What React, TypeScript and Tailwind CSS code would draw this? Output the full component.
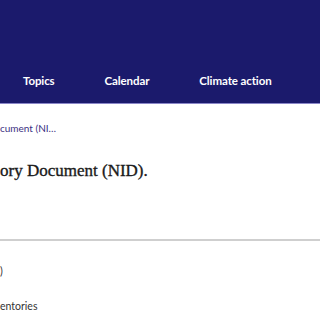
export default function App() {
  return (
    <div className="w-[320px] h-[320px] overflow-hidden bg-white" style={{ fontFamily: 'Lato, "Open Sans", sans-serif' }}>
      <header className="h-[104px] bg-[#1b1a6c] border-b border-[#8a86c8] flex items-end">
        <nav className="flex items-center h-[40px] mb-[2px] text-white font-bold text-[11.5px] tracking-[-0.1px]">
          <span className="ml-[23px]">Topics</span>
          <span className="ml-[50px]">Calendar</span>
          <span className="ml-[50px]">Climate action</span>
        </nav>
      </header>
      <div className="mt-[17px] text-[10px] leading-[14px] text-[#3b2f82] whitespace-nowrap">cument (NI…</div>
      <h1 className="mt-[24px] text-[17px] leading-[24px] font-normal text-[#1a1a1a] whitespace-nowrap" style={{ fontFamily: '"Liberation Serif", serif', WebkitTextStroke: '0.35px #1a1a1a' }}>
        ory Document (NID).
      </h1>
      <div className="mt-[56px] h-[2px] bg-[#cfcfcf]" />
      <div className="mt-[22px] text-[10.5px] leading-[16px] text-[#333]">)</div>
      <div className="mt-[19px] text-[10.5px] leading-[16px] text-[#333]">entories</div>
      <div className="mt-[6px] h-[2px] bg-[#cfcfcf]" />
    </div>
  );
}
